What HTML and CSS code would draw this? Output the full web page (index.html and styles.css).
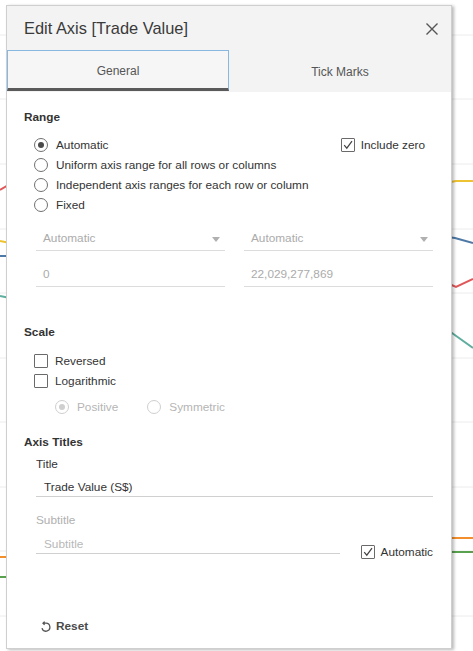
FILE: index.html
```html
<!DOCTYPE html>
<html lang="en">
<head>
<meta charset="utf-8">
<title>Edit Axis</title>
<link rel="stylesheet" href="styles.css">
</head>
<body>
<svg class="chart-bg" width="473" height="651" viewBox="0 0 473 651" aria-hidden="true">
  <g class="grid">
    <line x1="0" y1="35" x2="473" y2="35"/>
    <line x1="0" y1="99" x2="473" y2="99"/>
    <line x1="0" y1="164" x2="473" y2="164"/>
    <line x1="0" y1="229" x2="473" y2="229"/>
    <line x1="0" y1="293" x2="473" y2="293"/>
    <line x1="0" y1="358" x2="473" y2="358"/>
    <line x1="0" y1="422" x2="473" y2="422"/>
    <line x1="0" y1="487" x2="473" y2="487"/>
    <line x1="0" y1="551" x2="473" y2="551"/>
    <line x1="0" y1="616" x2="473" y2="616"/>
  </g>
  <g class="series">
    <polyline class="s-red" points="0,190 10,184"/>
    <polyline class="s-yellow" points="0,241 10,243"/>
    <polyline class="s-blue" points="0,256 10,256"/>
    <polyline class="s-teal" points="0,296 10,298"/>
    <polyline class="s-orange" points="0,557 10,557"/>
    <polyline class="s-green" points="0,577 10,577"/>
    <polyline class="s-yellow" points="440,184 456,181 473,181"/>
    <polyline class="s-blue" points="440,236 455,238 473,243"/>
    <polyline class="s-red" points="440,280 456,287 473,279"/>
    <polyline class="s-teal" points="440,326 452,333 473,348"/>
    <polyline class="s-orange" points="440,538 473,538"/>
    <polyline class="s-green" points="440,552 473,552"/>
  </g>
</svg>

<div class="dialog">
  <div class="dlg-head">
    <div class="title-row">
      <span class="title">Edit Axis [Trade Value]</span>
      <svg class="close" width="14" height="14" viewBox="0 0 14 14" aria-label="Close">
        <path d="M1.5 1.5 L12.5 12.5 M12.5 1.5 L1.5 12.5"/>
      </svg>
    </div>
    <div class="tabs">
      <div class="tab active">General</div>
      <div class="tab">Tick Marks</div>
    </div>
  </div>

  <div class="dlg-body">
    <div class="section-title">Range</div>
    <div class="range-top">
      <div class="opt-list">
        <div class="opt"><span class="radio checked"></span>Automatic</div>
        <div class="opt"><span class="radio"></span>Uniform axis range for all rows or columns</div>
        <div class="opt"><span class="radio"></span>Independent axis ranges for each row or column</div>
        <div class="opt"><span class="radio"></span>Fixed</div>
      </div>
      <div class="opt include-zero">
        <span class="check"><svg width="12" height="12" viewBox="0 0 12 12"><path d="M2.2 6.2 L4.8 9.2 L10 2.2"/></svg></span>Include zero
      </div>
    </div>

    <div class="field-grid">
      <div class="field select">Automatic<span class="caret"></span></div>
      <div class="field select">Automatic<span class="caret"></span></div>
      <div class="field">0</div>
      <div class="field">22,029,277,869</div>
    </div>

    <div class="section-title scale-title">Scale</div>
    <div class="opt-list checks">
      <div class="opt"><span class="check"></span>Reversed</div>
      <div class="opt"><span class="check"></span>Logarithmic</div>
    </div>
    <div class="sub-opts">
      <div class="opt disabled"><span class="radio checked"></span>Positive</div>
      <div class="opt disabled"><span class="radio"></span>Symmetric</div>
    </div>

    <div class="section-title axis-title">Axis Titles</div>
    <div class="field-label">Title</div>
    <div class="text-input filled">Trade Value (S$)</div>
    <div class="field-label muted">Subtitle</div>
    <div class="subtitle-row">
      <div class="text-input placeholder">Subtitle</div>
      <div class="opt auto-check">
        <span class="check"><svg width="12" height="12" viewBox="0 0 12 12"><path d="M2.2 6.2 L4.8 9.2 L10 2.2"/></svg></span>Automatic
      </div>
    </div>

    <div class="reset">
      <svg class="reset-icon" width="11" height="11" viewBox="0 0 11 11">
        <path d="M2 7.2 A4 4 0 1 0 5.5 2.2 H3.2 M4.6 0.6 L3 2.2 L4.6 3.8"/>
      </svg>
      <span>Reset</span>
    </div>
  </div>
</div>
</body>
</html>
```

FILE: styles.css
```css
* {
  box-sizing: border-box;
}

html, body {
  margin: 0;
  padding: 0;
  background: #ffffff;
}

body {
  width: 473px;
  height: 651px;
  overflow: hidden;
  font-family: "Liberation Sans", Arial, sans-serif;
  font-size: 11.8px;
  color: #333;
  padding: 5px 0 0 6px;
}

.chart-bg {
  position: absolute;
  left: 0;
  top: 0;
  z-index: 0;
}

.grid line {
  stroke: #ececec;
  stroke-width: 1;
}

.series polyline {
  fill: none;
  stroke-width: 2;
}

.s-red { stroke: #e15759; }
.s-yellow { stroke: #edc332; }
.s-blue { stroke: #4e79a7; }
.s-teal { stroke: #5fae9f; }
.s-orange { stroke: #f28e2b; }
.s-green { stroke: #59a14f; }

.dialog {
  position: relative;
  z-index: 1;
  width: 446px;
  height: 644px;
  border: 1px solid #cfcfcf;
  background: #fff;
  box-shadow: 2px 1px 3px rgba(0, 0, 0, 0.28);
  display: flex;
  flex-direction: column;
}

.dlg-head {
  background: #f3f3f3;
}

.title-row {
  height: 44px;
  display: flex;
  align-items: center;
  justify-content: space-between;
  padding: 0 12px 0 17px;
}

.title {
  font-size: 16.4px;
  color: #3a3a3a;
  padding-top: 1px;
}

.close {
  margin-top: 2px;
}

.close path {
  stroke: #555;
  stroke-width: 1.4;
  fill: none;
}

.tabs {
  display: grid;
  grid-template-columns: 222px 1fr;
  height: 42px;
}

.tab {
  display: flex;
  align-items: center;
  justify-content: center;
  color: #555;
  font-size: 12px;
  padding-top: 1px;
}

.tab.active {
  height: 41px;
  background: #f6f6f6;
  border: 1px solid #88b8df;
  border-bottom: 3px solid #5a5a5a;
  padding-top: 3px;
}

.dlg-body {
  flex: 1;
  display: flex;
  flex-direction: column;
  padding: 17px 18px 14px 17px;
}

.section-title {
  font-weight: bold;
  color: #333;
  line-height: 16px;
  height: 16px;
}

.range-top {
  display: flex;
  justify-content: space-between;
  align-items: flex-start;
  margin-top: 10px;
}

.opt-list {
  display: flex;
  flex-direction: column;
  padding-left: 10px;
}

.opt {
  display: flex;
  align-items: center;
  gap: 8px;
  height: 20px;
  line-height: 16px;
  color: #333;
  white-space: nowrap;
}

.include-zero {
  gap: 6px;
  margin-right: 8px;
}

.radio {
  width: 14px;
  height: 14px;
  border-radius: 50%;
  border: 1px solid #707070;
  background: #fff;
  display: flex;
  align-items: center;
  justify-content: center;
  flex: none;
}

.radio.checked::after {
  content: "";
  width: 6px;
  height: 6px;
  border-radius: 50%;
  background: #4a4a4a;
}

.check {
  width: 14px;
  height: 14px;
  border: 1px solid #6a6a6a;
  border-radius: 1px;
  background: #fff;
  display: flex;
  align-items: center;
  justify-content: center;
  flex: none;
}

.check svg path {
  fill: none;
  stroke: #444;
  stroke-width: 1.2;
}

.checks .opt {
  gap: 7px;
}

.field-grid {
  display: grid;
  grid-template-columns: 189px 189px;
  column-gap: 19px;
  row-gap: 11px;
  margin: 11px 0 0 12px;
}

.field {
  position: relative;
  height: 25px;
  line-height: 24px;
  padding-left: 7px;
  border-bottom: 1px solid #dcdcdc;
  color: #ababab;
}

.caret {
  position: absolute;
  right: 5px;
  top: 11px;
  width: 0;
  height: 0;
  border-left: 4px solid transparent;
  border-right: 4px solid transparent;
  border-top: 5px solid #b0b0b0;
}

.scale-title {
  margin-top: 37px;
}

.checks {
  margin-top: 11px;
}

.sub-opts {
  display: flex;
  gap: 29px;
  margin: 6px 0 0 31px;
}

.opt.disabled {
  color: #b5b5b5;
}

.opt.disabled .radio {
  border-color: #cfcfcf;
}

.opt.disabled .radio.checked::after {
  background: #cfcfcf;
}

.axis-title {
  margin-top: 17px;
}

.field-label {
  margin: 6px 0 0 12px;
  line-height: 16px;
  color: #333;
}

.field-label.muted {
  margin-top: 15px;
  color: #b0b0b0;
}

.text-input {
  height: 22px;
  line-height: 24px;
  padding-left: 8px;
  border-bottom: 1px solid #d0d0d0;
}

.text-input.filled {
  margin: 3px 0 0 12px;
  color: #333;
}

.subtitle-row {
  display: flex;
  align-items: flex-end;
  margin: 4px 0 0 12px;
}

.text-input.placeholder {
  width: 306px;
  color: #b8b8b8;
}

.auto-check {
  gap: 6px;
  margin-left: 21px;
  margin-bottom: -8px;
}

.reset {
  margin-top: auto;
  margin-left: 16px;
  display: flex;
  align-items: center;
  gap: 5px;
  height: 16px;
  color: #4a4a4a;
  font-weight: bold;
}

.reset-icon path {
  fill: none;
  stroke: #555;
  stroke-width: 1.3;
}
```
